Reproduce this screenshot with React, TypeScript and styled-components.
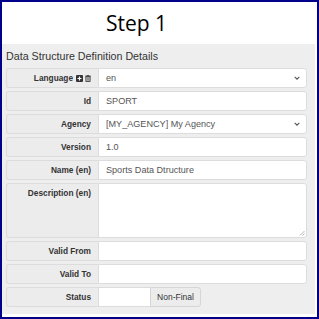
import React from 'react';
import styled, { createGlobalStyle } from 'styled-components';

const GlobalStyle = createGlobalStyle`
  html, body {
    margin: 0;
    padding: 0;
    background: #ffffff;
  }
  * {
    box-sizing: border-box;
  }
`;

type Field = {
  label: string;
  value?: string;
  kind?: 'text' | 'select' | 'area' | 'status' | 'language';
};

const fields: Field[] = [
  { label: 'Language', value: 'en', kind: 'language' },
  { label: 'Id', value: 'SPORT' },
  { label: 'Agency', value: '[MY_AGENCY] My Agency', kind: 'select' },
  { label: 'Version', value: '1.0' },
  { label: 'Name (en)', value: 'Sports Data Dtructure' },
  { label: 'Description (en)', kind: 'area' },
  { label: 'Valid From' },
  { label: 'Valid To' },
  { label: 'Status', kind: 'status' },
];

const Frame = styled.div`
  width: 319px;
  height: 319px;
  border: 2px solid #00008b;
  padding: 0 2px 3px 0;
  display: flex;
  flex-direction: column;
  background: #ffffff;
`;

const Title = styled.div`
  height: 42px;
  padding: 7px 0 0 104px;
  font-family: 'Open Sans', 'Liberation Sans', sans-serif;
  font-size: 21px;
  line-height: 28px;
  color: #000000;
`;

const Panel = styled.div`
  flex: 1;
  background: #eeeeee;
  padding: 5px 8px 0 4px;
  display: flex;
  flex-direction: column;
`;

const Heading = styled.div`
  font-family: 'Liberation Sans', Arial, sans-serif;
  font-size: 10.7px;
  line-height: 14px;
  color: #333333;
  margin-bottom: 5px;
`;

const Rows = styled.div`
  display: flex;
  flex-direction: column;
  gap: 3px;
`;

const Row = styled.div<{ $tall?: boolean }>`
  display: grid;
  grid-template-columns: 92px 1fr;
  height: ${({ $tall }) => ($tall ? '55px' : '20px')};
`;

const Label = styled.div`
  border: 1px solid #dcdcdc;
  border-right: none;
  border-radius: 3px 0 0 3px;
  background: #ececec;
  display: flex;
  justify-content: flex-end;
  align-items: flex-start;
  gap: 2px;
  padding: 0 7px 0 0;
  font-family: 'Liberation Sans', Arial, sans-serif;
  font-weight: bold;
  font-size: 8.3px;
  line-height: 18px;
  color: #333333;
  white-space: nowrap;
`;

const Icons = styled.span`
  display: inline-flex;
  align-items: center;
  gap: 2px;
  height: 18px;
  margin-left: 1px;
`;

const Value = styled.div`
  position: relative;
  border: 1px solid #dcdcdc;
  border-radius: 0 3px 3px 0;
  background: #ffffff;
  display: flex;
  align-items: center;
  justify-content: space-between;
  padding: 0 6px 0 7px;
  font-family: 'Liberation Sans', Arial, sans-serif;
  font-size: 9.1px;
  color: #555555;
  white-space: nowrap;
`;

const Grip = styled.svg`
  position: absolute;
  right: 1px;
  bottom: 1px;
`;

const StatusGroup = styled.div`
  display: flex;
  height: 20px;
`;

const StatusBlank = styled.div`
  width: 52px;
  border: 1px solid #dcdcdc;
  border-right: none;
  background: #ffffff;
`;

const StatusButton = styled.div`
  width: 51px;
  border: 1px solid #d6d6d6;
  border-radius: 0 3px 3px 0;
  background: #ececec;
  display: flex;
  align-items: center;
  justify-content: center;
  font-family: 'Liberation Sans', Arial, sans-serif;
  font-size: 8.5px;
  color: #333333;
`;

const Chevron = () => (
  <svg width="6" height="4" viewBox="0 0 6 4">
    <path d="M0.7 0.8 L3 3.2 L5.3 0.8" fill="none" stroke="#555" strokeWidth="1.1" />
  </svg>
);

const PlusSquare = () => (
  <svg width="7" height="7" viewBox="0 0 7 7">
    <rect x="0" y="0" width="7" height="7" rx="1" fill="#333" />
    <path d="M3.5 1.5 V5.5 M1.5 3.5 H5.5" stroke="#fff" strokeWidth="1.2" />
  </svg>
);

const Trash = () => (
  <svg width="6" height="7" viewBox="0 0 6 7">
    <path d="M0 1.2 H6 M2 1.2 V0.4 H4 V1.2" fill="none" stroke="#333" strokeWidth="0.8" />
    <path d="M0.9 1.8 H5.1 V6.6 H0.9 Z" fill="none" stroke="#333" strokeWidth="0.9" />
    <path d="M2.3 2.6 V5.8 M3.7 2.6 V5.8" stroke="#333" strokeWidth="0.6" />
  </svg>
);

const FieldRow = ({ field }: { field: Field }) => {
  const { label, value, kind } = field;
  return (
    <Row $tall={kind === 'area'}>
      <Label>
        {label}
        {kind === 'language' && (
          <Icons>
            <PlusSquare />
            <Trash />
          </Icons>
        )}
      </Label>
      {kind === 'status' ? (
        <StatusGroup>
          <StatusBlank />
          <StatusButton>Non-Final</StatusButton>
        </StatusGroup>
      ) : (
        <Value>
          <span>{value}</span>
          {(kind === 'select' || kind === 'language') && <Chevron />}
          {kind === 'area' && (
            <Grip width="6" height="6" viewBox="0 0 6 6">
              <path d="M5.5 1 L1 5.5 M5.5 3.5 L3.5 5.5" stroke="#999" strokeWidth="0.7" />
            </Grip>
          )}
        </Value>
      )}
    </Row>
  );
};

const App = () => (
  <>
    <GlobalStyle />
    <Frame>
      <Title>Step 1</Title>
      <Panel>
        <Heading>Data Structure Definition Details</Heading>
        <Rows>
          {fields.map((f) => (
            <FieldRow key={f.label} field={f} />
          ))}
        </Rows>
      </Panel>
    </Frame>
  </>
);

export default App;
